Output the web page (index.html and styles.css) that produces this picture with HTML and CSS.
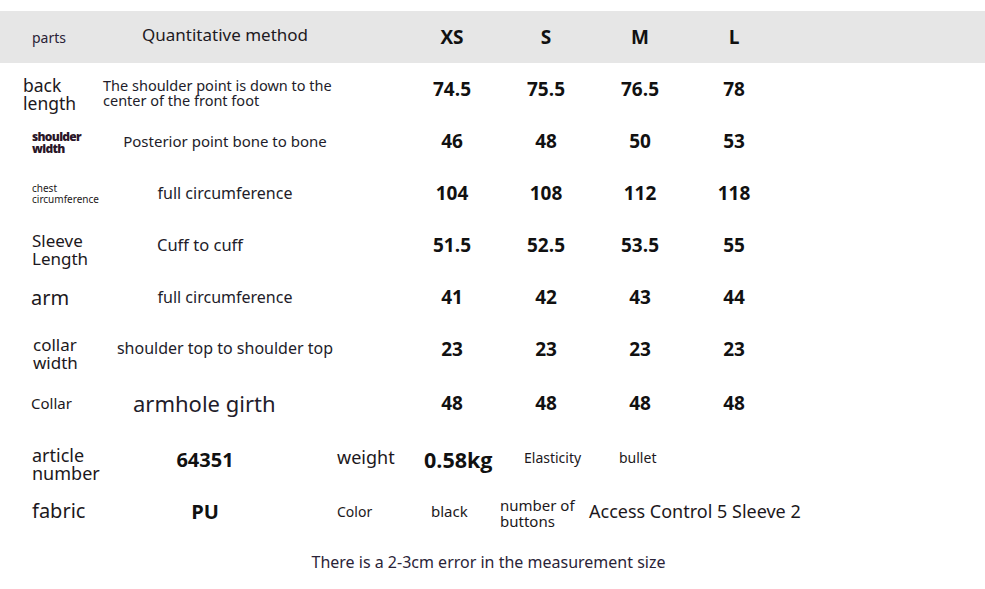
FILE: index.html
```html
<!DOCTYPE html>
<html>
<head>
<meta charset="utf-8">
<link rel="stylesheet" href="styles.css">
</head>
<body>
<div class="sheet">
  <div class="row head">
    <div class="part part-head">parts</div>
    <div class="method method-head">Quantitative method</div>
    <div class="sp"></div>
    <div class="val">XS</div>
    <div class="val">S</div>
    <div class="val">M</div>
    <div class="val">L</div>
  </div>

  <div class="row">
    <div class="part p-back">back<br>length</div>
    <div class="method m-left">The shoulder point is down to the<br>center of the front foot</div>
    <div class="sp"></div>
    <div class="val">74.5</div><div class="val">75.5</div><div class="val">76.5</div><div class="val">78</div>
  </div>

  <div class="row">
    <div class="part p-shoulder">shoulder<br>width</div>
    <div class="method">Posterior point bone to bone</div>
    <div class="sp"></div>
    <div class="val">46</div><div class="val">48</div><div class="val">50</div><div class="val">53</div>
  </div>

  <div class="row">
    <div class="part p-chest">chest<br>circumference</div>
    <div class="method m-full">full circumference</div>
    <div class="sp"></div>
    <div class="val">104</div><div class="val">108</div><div class="val">112</div><div class="val">118</div>
  </div>

  <div class="row">
    <div class="part p-sleeve">Sleeve<br>Length</div>
    <div class="method m-cuff">Cuff to cuff</div>
    <div class="sp"></div>
    <div class="val">51.5</div><div class="val">52.5</div><div class="val">53.5</div><div class="val">55</div>
  </div>

  <div class="row">
    <div class="part p-arm">arm</div>
    <div class="method m-full">full circumference</div>
    <div class="sp"></div>
    <div class="val">41</div><div class="val">42</div><div class="val">43</div><div class="val">44</div>
  </div>

  <div class="row">
    <div class="part p-collarw">collar<br>width</div>
    <div class="method m-big">shoulder top to shoulder top</div>
    <div class="sp"></div>
    <div class="val">23</div><div class="val">23</div><div class="val">23</div><div class="val">23</div>
  </div>

  <div class="row row-tall">
    <div class="part p-collar">Collar</div>
    <div class="method m-armhole">armhole girth</div>
    <div class="sp"></div>
    <div class="val">48</div><div class="val">48</div><div class="val">48</div><div class="val">48</div>
  </div>

  <div class="info">
    <div class="i-label i-article">article<br>number</div>
    <div class="i-val">64351</div>
    <div class="i-key">weight</div>
    <div class="i-val2">0.58kg</div>
    <div class="i-small i-elast">Elasticity</div>
    <div class="i-small i-bullet">bullet</div>
  </div>

  <div class="info info-second">
    <div class="i-label i-fabric">fabric</div>
    <div class="i-val">PU</div>
    <div class="i-key i-color">Color</div>
    <div class="i-black">black</div>
    <div class="i-buttons">number of<br>buttons</div>
    <div class="i-access">Access Control 5 Sleeve 2</div>
  </div>

  <div class="note">There is a 2-3cm error in the measurement size</div>
</div>
</body>
</html>
```

FILE: styles.css
```css
html, body {
  margin: 0;
  padding: 0;
  background: #ffffff;
}

body {
  font-family: "Noto Sans", "Open Sans", sans-serif;
  color: #1c1820;
}

.sheet {
  width: 985px;
  padding-top: 11px;
}

.row {
  display: grid;
  grid-template-columns: 100px 250px 55px 94px 94px 94px 94px;
  align-items: center;
  height: 52px;
}

.row-tall {
  height: 56px;
}

.head {
  background: #e6e6e6;
  height: 52px;
}

.part {
  padding-left: 32px;
  white-space: nowrap;
}

.part-head {
  font-size: 14px;
  color: #2a2236;
}

.method {
  text-align: center;
  font-size: 15px;
  line-height: 18px;
  white-space: nowrap;
  color: #221c2a;
}

.method-head {
  font-size: 17px;
  line-height: 20px;
  color: #1e1a22;
  padding-bottom: 4px;
}

.m-left {
  text-align: left;
  padding-left: 3px;
  line-height: 15px;
  font-size: 14.5px;
  padding-top: 7px;
}

.m-full {
  font-size: 16px;
}

.m-cuff {
  text-align: left;
  padding-left: 57px;
  font-size: 16.5px;
}

.m-big {
  font-size: 16px;
  padding-bottom: 2px;
}

.m-armhole {
  font-size: 22px;
  line-height: 26px;
  text-align: left;
  padding-left: 33px;
}

.val {
  text-align: center;
  font-family: "Open Sans", "Noto Sans", sans-serif;
  font-weight: 700;
  font-size: 19px;
  color: #111111;
}

.p-back {
  padding-left: 23px;
  font-size: 17.5px;
  line-height: 18px;
  padding-top: 10px;
}

.p-shoulder {
  font-size: 12px;
  line-height: 12px;
  font-weight: 900;
  letter-spacing: -0.7px;
  color: #2a1628;
  padding-top: 3px;
}

.p-chest {
  font-size: 10px;
  line-height: 11px;
  padding-top: 1px;
}

.p-sleeve {
  font-size: 17px;
  line-height: 18px;
  padding-top: 10px;
}

.p-arm {
  font-size: 20px;
  padding-left: 31px;
}

.p-collarw {
  padding-left: 33px;
  font-size: 17px;
  line-height: 18px;
  padding-top: 10px;
}

.p-collar {
  padding-left: 31px;
  font-size: 15px;
}

.info {
  display: grid;
  grid-template-columns: 132px 146px 59px 80px 83px 89px 1fr;
  align-items: center;
  height: 56px;
}

.info-second {
  height: 48px;
}

.i-label {
  grid-column: 1;
  padding-left: 32px;
  font-size: 18px;
  line-height: 18px;
  white-space: nowrap;
}

.i-article {
  padding-top: 10px;
}

.i-fabric {
  font-size: 20px;
}

.i-val,
.i-val2 {
  font-family: "Open Sans", "Noto Sans", sans-serif;
  font-weight: 700;
  color: #111111;
  white-space: nowrap;
}

.i-val {
  grid-column: 2;
  text-align: center;
  font-size: 20px;
}

.i-val2 {
  grid-column: 5;
  font-size: 21.5px;
  padding-left: 7px;
}

.i-key {
  grid-column: 3 / 5;
  justify-self: start;
  padding-left: 59px;
  font-size: 18px;
  padding-bottom: 4px;
  white-space: nowrap;
}

.i-color {
  font-size: 14px;
  padding-bottom: 0;
}

.i-black {
  grid-column: 5;
  font-size: 15px;
  padding-left: 14px;
}

.i-small {
  font-size: 14px;
  padding-bottom: 4px;
  white-space: nowrap;
}

.i-elast {
  grid-column: 6;
  padding-left: 24px;
}

.i-bullet {
  grid-column: 7;
  padding-left: 30px;
}

.i-buttons {
  grid-column: 6;
  font-size: 15px;
  line-height: 16px;
  white-space: nowrap;
  padding-top: 4px;
}

.i-access {
  grid-column: 7;
  font-size: 18px;
  white-space: nowrap;
}

.note {
  text-align: center;
  font-size: 16px;
  color: #2a2438;
  padding-top: 16px;
  padding-right: 8px;
}
```
